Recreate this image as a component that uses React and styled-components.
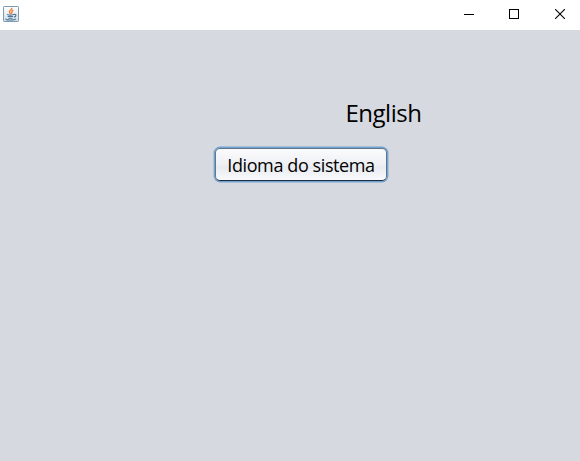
import React from 'react';
import styled, { createGlobalStyle } from 'styled-components';

const GlobalStyle = createGlobalStyle`
  *, *::before, *::after { box-sizing: border-box; }
  body { margin: 0; background: #d6d9df; }
`;

const Window = styled.div`
  display: flex;
  flex-direction: column;
  width: 580px;
  height: 461px;
  overflow: hidden;
  background: #d6d9df;
  color: #000;
  font-family: 'Open Sans', 'Noto Sans', sans-serif;
`;

const TitleBar = styled.header`
  display: flex;
  justify-content: space-between;
  flex: 0 0 30px;
  background: #fff;
`;

const AppIcon = styled.svg`
  display: block;
  margin: 6px 0 0 3px;
`;

const WindowControls = styled.div`
  display: flex;
`;

const ControlButton = styled.button`
  width: ${({ $width }) => $width}px;
  height: 30px;
  padding: 0;
  border: 0;
  background: transparent;
`;

const ControlGlyph = styled.svg`
  display: block;
  margin: 9px 0 11px 16px;
`;

const Content = styled.main`
  display: flex;
  flex-direction: column;
  align-items: flex-start;
  padding-top: 67px;
`;

const LanguageLabel = styled.div`
  height: 32px;
  margin-left: 345.5px;
  font-size: 24px;
  line-height: 32px;
  letter-spacing: -0.5px;
  white-space: nowrap;
`;

const SystemLanguageButton = styled.button`
  width: 172px;
  height: 33px;
  margin: 19px 0 0 215px;
  padding: 1px 0 0;
  border: 1px solid #61758c;
  border-bottom-color: #202c3c;
  border-radius: 5px;
  background: linear-gradient(#fbfbfc 0%, #f0f1f5 46%, #e9ebf0 60%, #f9fafd 100%);
  box-shadow: 0 0 0 1.4px #73a4d1;
  color: #000;
  font: 18px/28px 'Open Sans', 'Noto Sans', sans-serif;
  letter-spacing: -0.4px;
  white-space: nowrap;
`;

const JavaIcon = () => (
  <AppIcon width="16" height="16" viewBox="0 0 16 16" fill="none">
    <defs>
      <linearGradient id="tile" x1="0" y1="0" x2="0" y2="1">
        <stop offset="0" stopColor="#fff" />
        <stop offset="1" stopColor="#d4dde5" />
      </linearGradient>
    </defs>
    <rect x="0.5" y="0.5" width="15" height="15" rx="0.7" fill="url(#tile)" stroke="#7b9bb3" />
    <path d="M8.8 1.7C9.5 4 5.9 4.3 6.4 6.1c.2.8 1 1.1 1.1 1.7M10.4 4.1C7.8 5.1 9.4 6.2 8.5 7.8" stroke="#ee7d35" strokeWidth="1.4" />
    <path d="M4.1 8.5c1.5.7 4.8.6 6.7 0M4.7 10.5h5.5M5.3 12.3h4.2M10.8 8.5c3.1-.7 2.5 2.1.3 2.6M3.1 12.8c-2 1.3 8 1.8 9.8 0" stroke="#4c7698" strokeWidth="1.1" />
  </AppIcon>
);

export default function App() {
  return (
    <>
      <GlobalStyle />
      <Window>
        <TitleBar>
          <JavaIcon />
          <WindowControls>
            <ControlButton $width={45} aria-label="Minimize">
              <ControlGlyph width="10" height="10" shapeRendering="crispEdges">
                <path d="M0 5.5H10" stroke="#000" />
              </ControlGlyph>
            </ControlButton>
            <ControlButton $width={46} aria-label="Maximize">
              <ControlGlyph width="10" height="10" shapeRendering="crispEdges">
                <rect x="0.5" y="0.5" width="9" height="9" fill="none" stroke="#000" />
              </ControlGlyph>
            </ControlButton>
            <ControlButton $width={41} aria-label="Close">
              <ControlGlyph width="10" height="10">
                <path d="M0 0L10 10M10 0L0 10" stroke="#000" strokeWidth="1.1" />
              </ControlGlyph>
            </ControlButton>
          </WindowControls>
        </TitleBar>
        <Content>
          <LanguageLabel>English</LanguageLabel>
          <SystemLanguageButton>Idioma do sistema</SystemLanguageButton>
        </Content>
      </Window>
    </>
  );
}
